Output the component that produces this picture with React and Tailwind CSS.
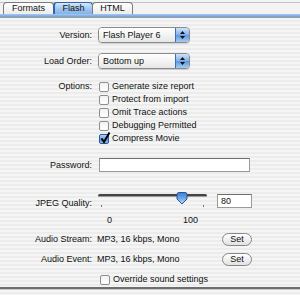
const stripes =
  "bg-[repeating-linear-gradient(180deg,#ececec_0px,#ececec_2px,#f5f5f5_2px,#f5f5f5_4px)]";

function Tab({ label, active, className = "" }) {
  return (
    <div
      className={`h-[12px] flex items-center justify-center border border-b-0 rounded-t-[4px] leading-none ${
        active
          ? "bg-[linear-gradient(180deg,#d6e8fb,#9cc4ef_55%,#82b3ea)] border-[#2f63ad] border-l-2"
          : "bg-[linear-gradient(180deg,#ffffff,#ececec)] border-[#7c7c7c]"
      } ${className}`}
    >
      {label}
    </div>
  );
}

function Popup({ value }) {
  return (
    <div className="w-[92px] h-[16px] flex rounded-[4px] border border-[#8a8a8a] overflow-hidden shadow-[0_1px_1px_rgba(0,0,0,0.15)]">
      <div className="flex-1 flex items-center pl-[4px] bg-[linear-gradient(180deg,#ffffff,#f4f4f4_50%,#e6e6e6)] leading-none">
        {value}
      </div>
      <div className="w-[14px] flex flex-col items-center justify-center gap-[2px] border-l border-[#3d6fb5] bg-[linear-gradient(180deg,#cfe3fa,#7fb0ea_50%,#5c97e0_51%,#a6cbf3)]">
        <svg width="5" height="3" viewBox="0 0 5 3">
          <path d="M0 3 L2.5 0 L5 3 Z" fill="#111" />
        </svg>
        <svg width="5" height="3" viewBox="0 0 5 3">
          <path d="M0 0 L2.5 3 L5 0 Z" fill="#111" />
        </svg>
      </div>
    </div>
  );
}

function Check({ checked }) {
  if (checked) {
    return (
      <div className="relative w-[10px] h-[10px] rounded-[2px] border border-[#2c5c9e] bg-[linear-gradient(180deg,#b9d6f6,#5d98df_55%,#8dbcef)]">
        <svg className="absolute -top-[3px] left-[0px]" width="11" height="12" viewBox="0 0 11 12">
          <path d="M1.5 6.5 L4 10 L9.5 0.5" fill="none" stroke="#000" strokeWidth="2" />
        </svg>
      </div>
    );
  }
  return (
    <div className="w-[10px] h-[10px] rounded-[2px] border border-[#8e8e8e] bg-[linear-gradient(180deg,#f2f2f2,#ffffff)]" />
  );
}

function Row({ label, children, className = "" }) {
  return (
    <div className={`flex items-center ${className}`}>
      <div className="w-[92px] text-right leading-none">{label}</div>
      <div className="ml-[6px] flex items-center">{children}</div>
    </div>
  );
}

function SetButton() {
  return (
    <div className="w-[30px] h-[13px] rounded-full border border-[#878787] bg-[linear-gradient(180deg,#ffffff,#f0f0f0_50%,#e2e2e2)] flex items-center justify-center leading-none">
      Set
    </div>
  );
}

export default function App() {
  const options = [
    ["Generate size report", false],
    ["Protect from import", false],
    ["Omit Trace actions", false],
    ["Debugging Permitted", false],
    ["Compress Movie", true],
  ];

  return (
    <div
      className={`w-[300px] h-[295px] overflow-hidden ${stripes} text-[9px] text-[#111] font-['Liberation_Sans',Arial,sans-serif]`}
    >
      {/* tab strip */}
      <div className="h-[18px] bg-[#f3f3f3]">
        <div className="h-[3px] border-b border-[#c4c4c4]" />
        <div className="flex pl-[3px] -mt-[1px]">
          <Tab label="Formats" className="w-[51px]" />
          <Tab label="Flash" active className="w-[40px] -ml-px" />
          <Tab label="HTML" className="w-[41px] -ml-px" />
        </div>
        <div className="h-[3px] bg-[linear-gradient(180deg,#a9c9f0,#6b9de0)]" />
        <div className="h-px bg-[#9a9a9a]" />
      </div>

      <Row label="Version:" className="mt-[9px] h-[16px]">
        <Popup value="Flash Player 6" />
      </Row>
      <Row label="Load Order:" className="mt-[10px] h-[16px]">
        <Popup value="Bottom up" />
      </Row>

      <div className="mt-[11px] flex">
        <div className="w-[92px] h-[13px] flex items-center justify-end leading-none">Options:</div>
        <div className="ml-[6px] flex flex-col">
          {options.map(([text, checked]) => (
            <div key={text} className="h-[13px] flex items-center gap-[3px] pl-px leading-none">
              <Check checked={checked} />
              <span>{text}</span>
            </div>
          ))}
        </div>
      </div>

      <Row label="Password:" className="mt-[13px] h-[14px]">
        <div className="ml-px w-[151px] h-[14px] bg-white border border-[#9a9a9a] border-t-[#6f6f6f]" />
      </Row>

      {/* jpeg quality slider */}
      <div className="mt-[17px] flex h-[20px]">
        <div className="w-[92px] pt-[10px] text-right leading-none">JPEG Quality:</div>
        <div className="ml-[6px] relative w-[109px] h-[20px]">
          <div className="mt-[5px] h-[3px] bg-[#444] border-b border-[#9b9b9b] rounded-full" />
          <div className="flex justify-between px-[3px] mt-[8px]">
            <div className="w-px h-[2px] bg-[#777]" />
            <div className="w-px h-[2px] bg-[#777]" />
          </div>
          <svg className="absolute top-[3px] left-[78px]" width="12" height="13" viewBox="0 0 12 13">
            <defs>
              <linearGradient id="thumb" x1="0" y1="0" x2="0" y2="1">
                <stop offset="0" stopColor="#3f7fd6" />
                <stop offset="0.5" stopColor="#6aa6ec" />
                <stop offset="1" stopColor="#c3defa" />
              </linearGradient>
            </defs>
            <path
              d="M1 2.5 Q1 0.5 3 0.5 H9 Q11 0.5 11 2.5 V7 L6 12 L1 7 Z"
              fill="url(#thumb)"
              stroke="#2a5593"
              strokeWidth="1"
            />
          </svg>
        </div>
        <div className="ml-[10px] mt-[5px] w-[35px] h-[14px] bg-white border border-[#9a9a9a] border-t-[#6f6f6f] flex items-center pl-[3px] leading-none">
          80
        </div>
      </div>
      <div className="mt-[5px] h-[12px] flex items-center leading-none">
        <span className="ml-[107px]">0</span>
        <span className="ml-[71px]">100</span>
      </div>

      <div className="mt-[6px] h-[14px] flex items-center">
        <div className="w-[92px] text-right leading-none">Audio Stream:</div>
        <div className="ml-[5px] w-[125px] leading-none">MP3, 16 kbps, Mono</div>
        <SetButton />
      </div>
      <div className="mt-[6px] h-[14px] flex items-center">
        <div className="w-[92px] text-right leading-none">Audio Event:</div>
        <div className="ml-[5px] w-[125px] leading-none">MP3, 16 kbps, Mono</div>
        <SetButton />
      </div>

      <div className="mt-[7px] h-[13px] flex items-center gap-[3px] pl-[100px] leading-none">
        <Check />
        <span>Override sound settings</span>
      </div>

      <div className="mt-[1px] h-[2px] bg-[#6e6e6e]" />
      <div className="h-px bg-[#c9c9c9]" />
    </div>
  );
}
